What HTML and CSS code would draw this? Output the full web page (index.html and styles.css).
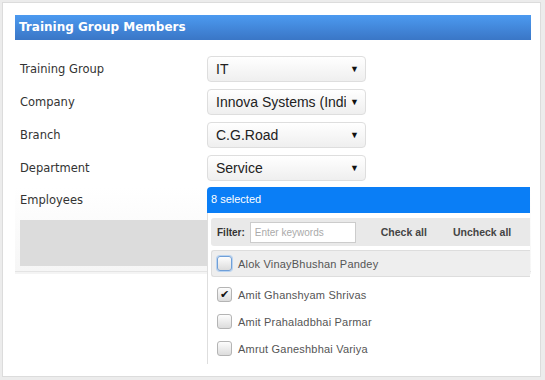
FILE: index.html
```html
<!DOCTYPE html>
<html lang="en">
<head>
  <meta charset="UTF-8">
  <title>Training Group Members</title>
  <link rel="stylesheet" href="styles.css">
</head>
<body>

  <div class="card">
    <div class="title">Training Group Members</div>

    <div class="row">
      <label>Training Group</label>
      <div class="select"><span>IT</span><i>&#9660;</i></div>
    </div>
    <div class="row">
      <label>Company</label>
      <div class="select"><span>Innova Systems (India)</span><i>&#9660;</i></div>
    </div>
    <div class="row">
      <label>Branch</label>
      <div class="select"><span>C.G.Road</span><i>&#9660;</i></div>
    </div>
    <div class="row">
      <label>Department</label>
      <div class="select"><span>Service</span><i>&#9660;</i></div>
    </div>

    <div class="employees">
      <div class="row">
        <label>Employees</label>
        <div class="ms-button">8 selected</div>
      </div>
      <div class="grey-box"></div>

      <div class="ms-menu">
        <div class="ms-header">
          <b>Filter:</b>
          <input type="text" placeholder="Enter keywords">
          <a>Check all</a>
          <a>Uncheck all</a>
        </div>
        <ul class="ms-list">
          <li class="hover"><span class="box focus"></span>Alok VinayBhushan Pandey</li>
          <li><span class="box checked">&#10004;</span>Amit Ghanshyam Shrivas</li>
          <li><span class="box"></span>Amit Prahaladbhai Parmar</li>
          <li><span class="box"></span>Amrut Ganeshbhai Variya</li>
        </ul>
      </div>
    </div>
  </div>

</body>
</html>
```

FILE: styles.css
```css
body {
  margin: 0;
  padding: 2px 4px 2px 2px;
  background-color: #ececec;
  font-family: 'DejaVu Sans', Verdana, sans-serif;
  color: #333;
}

.card {
  background-color: white;
  border: 1px solid #dcdcdc;
  height: 375px;
  box-sizing: border-box;
  padding: 12px 9px 0 12px;
}

.title {
  height: 25px;
  line-height: 24px;
  padding-left: 4px;
  background: linear-gradient(#4c9af0, #3a76c6);
  color: white;
  font-size: 12px;
  font-weight: bold;
  margin-bottom: 16px;
}

.row {
  display: flex;
  align-items: center;
  height: 26px;
  margin-bottom: 7px;
}

.row label {
  width: 192px;
  flex-shrink: 0;
  padding-left: 5px;
  box-sizing: border-box;
  font-size: 11.5px;
  color: #333;
}

.select {
  width: 159px;
  height: 26px;
  box-sizing: border-box;
  border: 1px solid #dedede;
  border-radius: 4px;
  background: linear-gradient(#ffffff, #efefef);
  display: flex;
  align-items: center;
  padding: 0 6px 0 8px;
  font-family: 'Liberation Sans', Arial, sans-serif;
  font-size: 14px;
  color: #222;
}

.select span {
  flex: 1;
  min-width: 0;
  white-space: nowrap;
  overflow: hidden;
}

.select i {
  font-style: normal;
  font-size: 9px;
  margin-left: 4px;
  color: #111;
}

.employees {
  position: relative;
  margin-top: -1px;
  height: 84px;
  background: linear-gradient(#ffffff, #f6f6f6);
  border-bottom: 1px solid #e4e4e4;
  box-shadow: 0 2px 0 #f4f4f4;
}

.ms-button {
  width: 323px;
  height: 26px;
  box-sizing: border-box;
  background-color: #0a7ef6;
  border-radius: 4px 0 0 0;
  color: white;
  font-family: 'Liberation Sans', Arial, sans-serif;
  font-size: 11px;
  line-height: 25px;
  padding-left: 4px;
}

.grey-box {
  margin-left: 5px;
  width: 187px;
  height: 46px;
  background-color: #dcdcdc;
}

.ms-menu {
  position: absolute;
  left: 192px;
  top: 26px;
  width: 323px;
  height: 151px;
  box-sizing: border-box;
  padding: 5px 0 0 3px;
  border-left: 1px solid #dedede;
  background-color: white;
  font-family: 'Liberation Sans', Arial, sans-serif;
  font-size: 11px;
  color: #444;
}

.ms-header {
  display: flex;
  align-items: center;
  height: 28px;
  background-color: #e9e9e9;
  border-radius: 3px 0 0 3px;
  padding-left: 6px;
  font-size: 10px;
  color: #333;
  white-space: nowrap;
}

.ms-header b {
  margin-right: 5px;
}

.ms-header input {
  flex-shrink: 0;
  width: 106px;
  height: 21px;
  box-sizing: border-box;
  border: 1px solid #cccccc;
  background-color: white;
  padding: 0 4px;
  font-family: 'Liberation Sans', Arial, sans-serif;
  font-size: 10px;
  margin-right: 25px;
}

.ms-header input::placeholder {
  color: #aaa;
}

.ms-header a {
  flex-shrink: 0;
  font-size: 10.5px;
  font-weight: bold;
  color: #444;
  margin-right: 26px;
}

.ms-list {
  list-style: none;
  margin: 4px 0 0 0;
  padding: 0;
}

.ms-list li {
  display: flex;
  align-items: center;
  height: 27px;
  padding-left: 6px;
  color: #555;
  letter-spacing: 0.2px;
}

.ms-list li.hover {
  background-color: #eeeeee;
  border: 1px solid #dddddd;
  border-right: none;
  border-radius: 3px 0 0 3px;
  height: 25px;
  padding-left: 5px;
  margin-bottom: 4px;
}

.box {
  width: 13px;
  height: 13px;
  border: 1px solid #b4b4b4;
  border-radius: 3px;
  background: linear-gradient(#fdfdfd, #dcdcdc);
  margin-right: 6px;
  display: inline-flex;
  align-items: center;
  justify-content: center;
  font-size: 11px;
  color: #111;
}

.box.focus {
  border-color: #6f9fd8;
  box-shadow: 0 0 0 1px #b9d3f0;
}
```
